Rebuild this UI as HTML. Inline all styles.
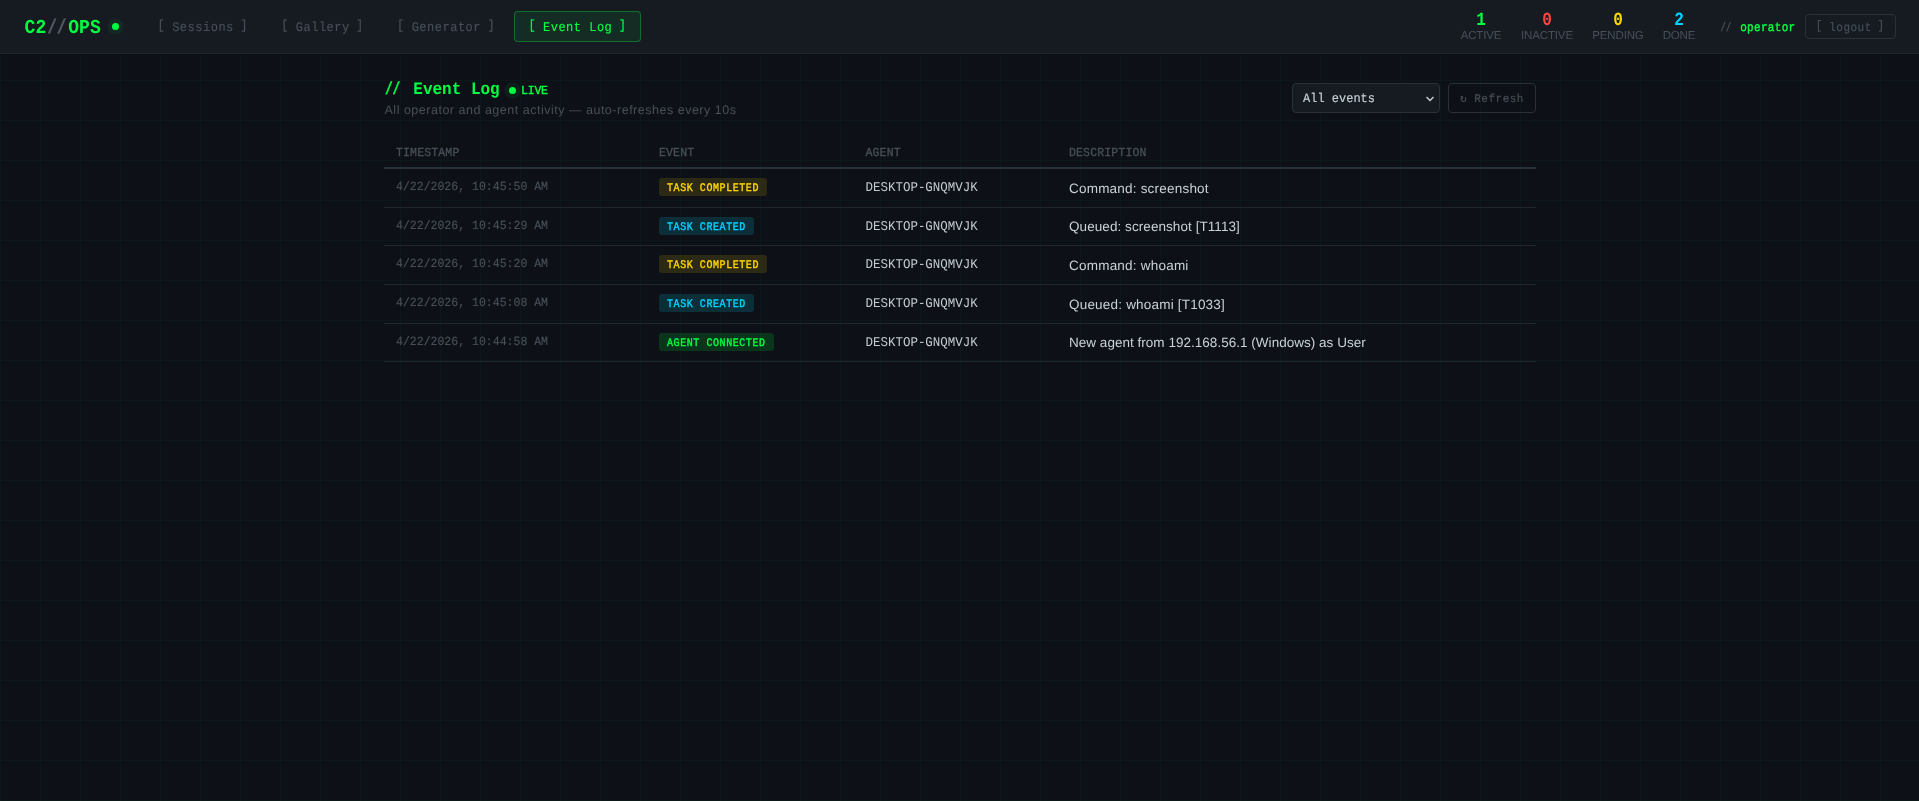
<!DOCTYPE html>
<html lang="en">
<head>
<meta charset="utf-8">
<title>C2//OPS — Event Log</title>
<style>
*{box-sizing:border-box;margin:0;padding:0}
html,body{width:100%;height:100%}
body{
  background-color:#0d1117;
  color:#c9d1d9;
  font-family:"Liberation Sans",sans-serif;
  overflow:hidden;
  position:relative;
}
#wrap{
  position:absolute;left:0;top:0;right:0;bottom:0;will-change:transform;text-rendering:geometricPrecision;
  background-image:
    linear-gradient(rgba(0,255,65,.026) 1px,transparent 1px),
    linear-gradient(90deg,rgba(0,255,65,.026) 1px,transparent 1px);
  background-size:40px 40px;
}
header{
  position:absolute;left:0;top:0;right:0;height:54px;
  background:#161b22;border-bottom:1px solid #21262d;
  font-family:"Liberation Mono",monospace;
}
.sy{display:inline-block;transform-origin:50% 77%}
.logo{position:absolute;left:24.5px;top:17px;letter-spacing:.1px;height:24px;line-height:24px;font-size:18px;font-weight:700;color:#00ff41;white-space:pre;transform:scaleY(1.1);transform-origin:50% 77%}
.logo .s{color:#535a64;-webkit-text-stroke:.4px #535a64;display:inline-block;transform:scaleX(.86)}
.sl{display:inline-block;position:relative;left:-1.2px;transform:scaleX(.8);-webkit-text-stroke:.35px currentColor}
u{text-decoration:none;position:relative;top:-2px}
u:first-child{left:.8px}
u:last-child{left:-1.3px}
.nav a,.logout,.user,.sel,.btn{-webkit-text-stroke:.15px currentColor}
td.ts{-webkit-text-stroke:.15px currentColor}
th{-webkit-text-stroke:.3px currentColor}
.bd{-webkit-text-stroke:.35px currentColor}
.dot{position:absolute;width:7px;height:7px;border-radius:50%;background:#00ff41;box-shadow:0 0 0 4.5px rgba(0,255,65,.06)}
.nav a{position:absolute;top:11px;height:31px;line-height:29px;border:1px solid transparent;border-radius:4px;
  font-size:12px;letter-spacing:.5px;color:#484f58;text-align:center;white-space:pre;text-decoration:none}
.nav a span{display:inline-block;line-height:1;position:relative;top:2.2px;transform:scaleY(1.1);transform-origin:50% 77%}
.nav a.on{color:#00ff41;background:rgba(0,255,65,.08);border-color:rgba(0,255,65,.33)}
.stat{position:absolute;top:0;text-align:center}
.stat b{position:absolute;left:0;right:0;top:11px;font-size:16px;line-height:20px;font-weight:700;font-family:"Liberation Mono",monospace;transform:scaleY(1.17);transform-origin:50% 77%}
.stat i{position:absolute;left:0;right:0;top:29px;font-style:normal;font-family:"Liberation Sans",sans-serif;font-size:11.5px;line-height:14px;letter-spacing:-.15px;color:#484f58;white-space:nowrap}
.user{position:absolute;top:20.6px;left:1719.5px;font-size:11px;line-height:16px;letter-spacing:.3px;color:#484f58;white-space:pre;transform:scaleY(1.14);transform-origin:0 68%}
.user b{color:#00ff41;font-weight:400;-webkit-text-stroke:.4px #00ff41}
.user .sl{left:-.6px}
.logout{position:absolute;left:1805px;top:14px;width:91px;height:25px;line-height:23px;border:1px solid #2a3038;border-radius:4px;
  font-size:11px;letter-spacing:.5px;color:#484f58;text-align:center;white-space:pre}
.logout span{display:inline-block;line-height:1;position:relative;top:3.2px;transform:scaleY(1.12);transform-origin:50% 77%}
main{position:absolute;left:384px;top:54px;width:1152px}
h1{position:absolute;left:.5px;top:24.8px;font-family:"Liberation Mono",monospace;font-size:16px;line-height:22px;font-weight:700;color:#00ff41;white-space:pre;transform:scaleY(1.08);transform-origin:0 77%}
.live{position:absolute;left:137px;top:31.2px;font-family:"Liberation Mono",monospace;font-size:11.5px;line-height:14px;font-weight:400;-webkit-text-stroke:.4px currentColor;letter-spacing:-.2px;color:#00ff41;transform:scaleY(1.06);transform-origin:0 69%}
.sub{position:absolute;left:.5px;top:48px;font-size:12.5px;line-height:16px;letter-spacing:.51px;color:#484f58;white-space:nowrap}
.sel{position:absolute;left:908px;top:29px;width:148px;height:30px;background:#161b22;border:1px solid #2a3038;border-radius:4px;
  font-family:"Liberation Mono",monospace;font-size:12px;line-height:30px;padding-left:10px;color:#c9d1d9}
.sel span{display:inline-block;transform:scaleY(1.06);transform-origin:50% 77%}
.sel svg{position:absolute;right:4px;top:10.8px}
.btn{position:absolute;left:1064px;top:29px;width:88px;height:30px;border:1px solid #2a3038;border-radius:4px;
  font-family:"Liberation Mono","DejaVu Sans Mono",monospace;font-size:11px;letter-spacing:.5px;line-height:30px;text-align:center;color:#484f58;white-space:pre}
.btn span{display:inline-block;position:relative;top:1px;transform:scaleY(1.06);transform-origin:50% 77%}
table{position:absolute;left:0;top:84px;width:1152px;border-collapse:separate;border-spacing:0;table-layout:fixed}
th{height:31px;padding:0 12px;text-align:left;font-family:"Liberation Mono",monospace;font-size:11.5px;font-weight:400;letter-spacing:.15px;color:#484f58;border-bottom:2px solid #2a3038;vertical-align:middle}
th span{display:inline-block;line-height:1;position:relative;top:1px;transform:scaleY(1.06);transform-origin:0 77%}
tr.s td{height:38px}
td{height:39px;padding:0 12px;border-bottom:1px solid #21262d;vertical-align:middle;white-space:nowrap}
td.ts{font-family:"Liberation Mono",monospace;font-size:11.52px;color:#484f58}
td.ts span{display:inline-block;position:relative;top:-.5px;transform:scaleY(1.08);transform-origin:0 77%}
td.ag{font-family:"Liberation Mono",monospace;font-size:12.48px;color:#c3cad2}
td.ag span{display:inline-block;line-height:1;transform:scaleY(1.08);transform-origin:0 77%}
td.ds{font-size:13.5px;color:#c9d1d9}
td.ds span{position:relative;top:0px}
.bd{display:inline-block;position:relative;top:-1px;height:18px;line-height:18px;padding:0 8px;border-radius:3px;font-family:"Liberation Mono",monospace;font-size:10px;font-weight:400;letter-spacing:.57px;white-space:pre;vertical-align:middle}
.bd span{display:inline-block;line-height:1;position:relative;top:3px;transform:scaleY(1.16);transform-origin:0 77%}
.y{color:#ffd700;background:rgba(255,215,0,.13)}
.c{color:#00d4ff;background:rgba(0,212,255,.15)}
.g{color:#00ff41;background:rgba(0,255,65,.15)}
tr.s .bd{top:0}
</style>
</head>
<body>
<div id="wrap">
<header>
  <div class="logo">C2<span class="s">//</span>OPS</div>
  <span class="dot" style="left:112px;top:23px"></span>
  <nav class="nav">
    <a style="left:143.2px;width:119.6px"><span><u>[</u> Sessions <u>]</u></span></a>
    <a style="left:266.8px;width:111.9px"><span><u>[</u> Gallery <u>]</u></span></a>
    <a style="left:382.7px;width:127.3px"><span><u>[</u> Generator <u>]</u></span></a>
    <a class="on" style="left:514px;width:127.3px"><span><u>[</u> Event Log <u>]</u></span></a>
  </nav>
  <div class="stat" style="left:1451px;width:60px"><b style="color:#00ff41">1</b><i>ACTIVE</i></div>
  <div class="stat" style="left:1517px;width:60px"><b style="color:#ff4444">0</b><i>INACTIVE</i></div>
  <div class="stat" style="left:1588px;width:60px"><b style="color:#ffd700">0</b><i>PENDING</i></div>
  <div class="stat" style="left:1649px;width:60px"><b style="color:#00d4ff">2</b><i>DONE</i></div>
  <div class="user"><span class="sl">//</span> <b>operator</b></div>
  <div class="logout"><span><u>[</u> logout <u>]</u></span></div>
</header>
<main>
  <h1><span class="sl">//</span> Event Log</h1>
  <span class="dot" style="left:125px;top:33px"></span>
  <span class="live">LIVE</span>
  <div class="sub">All operator and agent activity — auto-refreshes every 10s</div>
  <div class="sel"><span>All events</span><svg width="10" height="8" viewBox="0 0 10 8"><path d="M1.5 2 L5 5.4 L8.5 2" fill="none" stroke="#c9d1d9" stroke-width="1.4"/></svg></div>
  <div class="btn"><span>↻ Refresh</span></div>
  <table>
    <colgroup><col style="width:263px"><col style="width:206.5px"><col style="width:203.5px"><col></colgroup>
    <thead><tr><th><span>TIMESTAMP</span></th><th><span>EVENT</span></th><th><span>AGENT</span></th><th><span>DESCRIPTION</span></th></tr></thead>
    <tbody>
      <tr><td class="ts"><span>4/22/2026, 10:45:50 AM</span></td><td><span class="bd y"><span>TASK COMPLETED</span></span></td><td class="ag"><span>DESKTOP-GNQMVJK</span></td><td class="ds"><span style="letter-spacing:.21px">Command: screenshot</span></td></tr>
      <tr class="s"><td class="ts"><span>4/22/2026, 10:45:29 AM</span></td><td><span class="bd c"><span>TASK CREATED</span></span></td><td class="ag"><span>DESKTOP-GNQMVJK</span></td><td class="ds"><span style="letter-spacing:.07px">Queued: screenshot [T1113]</span></td></tr>
      <tr><td class="ts"><span>4/22/2026, 10:45:20 AM</span></td><td><span class="bd y"><span>TASK COMPLETED</span></span></td><td class="ag"><span>DESKTOP-GNQMVJK</span></td><td class="ds"><span style="letter-spacing:.22px">Command: whoami</span></td></tr>
      <tr><td class="ts"><span>4/22/2026, 10:45:08 AM</span></td><td><span class="bd c"><span>TASK CREATED</span></span></td><td class="ag"><span>DESKTOP-GNQMVJK</span></td><td class="ds"><span style="letter-spacing:.2px">Queued: whoami [T1033]</span></td></tr>
      <tr class="s"><td class="ts"><span>4/22/2026, 10:44:58 AM</span></td><td><span class="bd g"><span>AGENT CONNECTED</span></span></td><td class="ag"><span>DESKTOP-GNQMVJK</span></td><td class="ds"><span style="letter-spacing:.025px">New agent from 192.168.56.1 (Windows) as User</span></td></tr>
    </tbody>
  </table>
</main>
</div>
</body>
</html>
